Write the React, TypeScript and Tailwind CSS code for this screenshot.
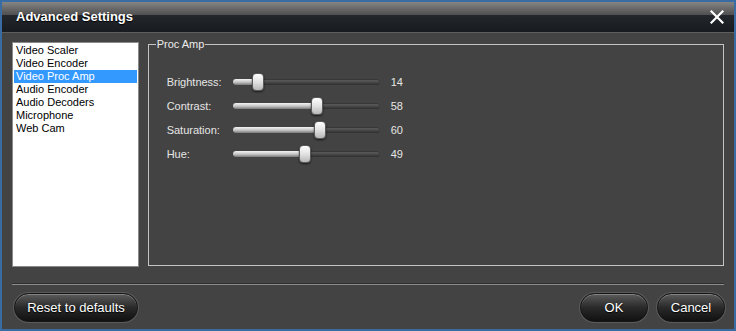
import React from 'react';

const items = ['Video Scaler', 'Video Encoder', 'Video Proc Amp', 'Audio Encoder', 'Audio Decoders', 'Microphone', 'Web Cam'];

const sliders = [
  { label: 'Brightness:', value: 14 },
  { label: 'Contrast:', value: 58 },
  { label: 'Saturation:', value: 60 },
  { label: 'Hue:', value: 49 },
];

function Slider({ value }: { value: number }) {
  // track is 147px, thumb 12px, so the thumb travels 135px
  const left = Math.round((value / 100) * 135);
  return (
    <div className="relative h-[20px] w-[147px] flex items-center">
      <div className="h-[6px] w-full rounded-full bg-gradient-to-b from-[#6a6a6a] to-[#2e2e2e] shadow-[inset_0_1px_1px_rgba(0,0,0,0.5)]" />
      <div
        className="absolute left-0 top-[7px] h-[6px] rounded-l-full bg-gradient-to-b from-[#f4f4f4] via-[#c8c8c8] to-[#7a7a7a]"
        style={{ width: left + 6 }}
      />
      <div
        className="absolute top-[1px] h-[18px] w-[12px] rounded-[4px] border border-[#5a5a5a] bg-gradient-to-b from-[#ffffff] via-[#e2e2e2] to-[#b8b8b8] shadow-[0_1px_2px_rgba(0,0,0,0.6)]"
        style={{ left }}
      />
    </div>
  );
}

function PillButton({ children, className }: { children: React.ReactNode; className: string }) {
  return (
    <button
      className={
        'h-[29px] rounded-full border border-[#151515] bg-gradient-to-b from-[#5c5c5c] via-[#2a2a2a] to-[#111111] text-[13px] text-white shadow-[0_0_0_1px_#5a5a5a,inset_0_1px_0_rgba(255,255,255,0.25)] [text-shadow:0_1px_1px_#000] ' +
        className
      }
    >
      {children}
    </button>
  );
}

export default function App() {
  return (
    <div className="w-[736px] h-[331px] border-2 border-[#3a6ca4] bg-[#434343] flex flex-col font-['Liberation_Sans',Arial,sans-serif] select-none">
      {/* title bar */}
      <div className="h-[31px] flex flex-col border-b border-[#5e5e5e]">
        <div className="h-[13px] bg-gradient-to-b from-[#858585] to-[#4f4f4f]" />
        <div className="flex-1 bg-gradient-to-b from-[#23262b] to-[#181b20]" />
        <div className="absolute w-[732px] h-[30px] flex items-center justify-between pl-[14px] pr-[10px]">
          <span className="text-[13px] font-bold text-white [text-shadow:0_1px_1px_#000]">Advanced Settings</span>
          <svg width="14" height="14" viewBox="0 0 14 14">
            <path d="M1.5 1.5 L12.5 12.5 M12.5 1.5 L1.5 12.5" stroke="#ffffff" strokeWidth="2.2" strokeLinecap="square" />
          </svg>
        </div>
      </div>

      {/* body */}
      <div className="flex px-[10px] pt-[9px] gap-[9px]">
        <div className="w-[127px] h-[225px] bg-white border border-[#8a8a8a] pt-[1px] px-[1px]">
          {items.map((it) => (
            <div
              key={it}
              className={
                'h-[13px] leading-[13px] pl-[2px] text-[11px] ' +
                (it === 'Video Proc Amp' ? 'bg-[#3399ff] text-white' : 'text-black')
              }
            >
              {it}
            </div>
          ))}
        </div>

        <div className="relative mt-[2px] w-[578px] h-[222px] border border-[#c4c4c4]">
          <span className="absolute left-[7px] top-[-8px] bg-[#434343] px-[1px] text-[11px] leading-[14px] text-[#ececec]">
            Proc Amp
          </span>
          <div className="flex flex-col gap-[4px] pt-[27px] pl-[18px]">
            {sliders.map((s) => (
              <div key={s.label} className="flex items-center h-[20px]">
                <span className="w-[66px] text-[11px] text-[#e6e6e6]">{s.label}</span>
                <Slider value={s.value} />
                <span className="ml-[11px] text-[11px] text-[#e6e6e6]">{s.value}</span>
              </div>
            ))}
          </div>
        </div>
      </div>

      {/* separator */}
      <div className="mx-[10px] mt-[16px] h-[2px] border-t border-[#2e2e2e] bg-[#8c8c8c]" />

      {/* buttons */}
      <div className="flex items-center justify-between pl-[12px] pr-[9px] pt-[8px]">
        <PillButton className="w-[124px]">Reset to defaults</PillButton>
        <div className="flex gap-[9px]">
          <PillButton className="w-[68px]">OK</PillButton>
          <PillButton className="w-[68px]">Cancel</PillButton>
        </div>
      </div>
    </div>
  );
}
